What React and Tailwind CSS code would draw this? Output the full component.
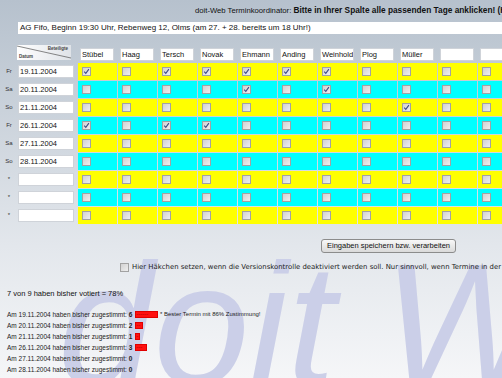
import React from 'react'

const names = ['Stübel', 'Haag', 'Tersch', 'Novak', 'Ehmann', 'Anding', 'Weinhold', 'Plog', 'Müller', '', '']

const rows = [
  { day: 'Fr', date: '19.11.2004', checks: [0, 2, 3, 4, 5, 6] },
  { day: 'Sa', date: '20.11.2004', checks: [4, 6] },
  { day: 'So', date: '21.11.2004', checks: [8] },
  { day: 'Fr', date: '26.11.2004', checks: [0, 2, 3] },
  { day: 'Sa', date: '27.11.2004', checks: [] },
  { day: 'So', date: '28.11.2004', checks: [] },
  { day: '*', date: '', checks: [] },
  { day: '*', date: '', checks: [] },
  { day: '*', date: '', checks: [] },
]

const stats = [
  { date: '19.11.2004', n: 6, note: '* Bester Termin mit 86% Zustimmung!' },
  { date: '20.11.2004', n: 2 },
  { date: '21.11.2004', n: 1 },
  { date: '26.11.2004', n: 3 },
  { date: '27.11.2004', n: 0 },
  { date: '28.11.2004', n: 0 },
]

function Box({ checked }) {
  return (
    <span className="w-[9px] h-[9px] shrink-0 border border-[#a2a2a2] bg-linear-to-br from-[#d2d2d2] to-[#eeeeee] flex items-center justify-center">
      {checked && (
        <svg width="7" height="7" viewBox="0 0 7 7">
          <path d="M1.2 3.6 L2.8 5.3 L5.9 1.2" fill="none" stroke="#3c4a86" strokeWidth="1.1" />
        </svg>
      )}
    </span>
  )
}

function DatumCell() {
  return (
    <div className="relative ml-[17px] w-[54px] h-[15px] bg-linear-to-r from-white to-[#dfe3e8]">
      <svg className="absolute inset-0" width="54" height="15" viewBox="0 0 54 15">
        <line x1="0" y1="1" x2="54" y2="13" stroke="#555" strokeWidth="0.7" />
      </svg>
      <span className="absolute right-[3px] top-[1px] text-[4.5px] leading-[5px] font-bold text-[#444]">Beteiligte</span>
      <span className="absolute left-[2px] bottom-[1px] text-[4.5px] leading-[5px] font-bold text-[#444]">Datum</span>
    </div>
  )
}

export default function App() {
  return (
    <div className="relative w-[502px] h-[378px] overflow-hidden bg-linear-to-b from-[#b6c1cd] via-[#e3e7ec] via-65% to-[#f5f6f8] text-[#111]" style={{ fontFamily: '"Liberation Sans", Arial, sans-serif' }}>
      <div className="absolute left-[58px] top-[238px] text-[172px] leading-none italic text-[#cbcfe8] whitespace-nowrap select-none">
        doit Web
      </div>

      <div className="relative">
        <div className="pl-[195px] pt-[6px] text-[7.7px] leading-[9px] whitespace-nowrap">
          doit-Web Terminkoordinator: <b className="text-[8.3px]">Bitte in Ihrer Spalte alle passenden Tage anklicken! (H</b>
        </div>

        <div className="ml-[18px] mt-[7px] w-[484px] h-[12px] bg-white text-[8px] leading-[12px] pl-[2px] whitespace-nowrap">
          AG Fifo, Beginn 19:30 Uhr, Rebenweg 12, Olms (am 27. + 28. bereits um 18 Uhr!)
        </div>

        <div className="mt-[11px] flex h-[17px] w-[600px]">
          <DatumCell />
          <div className="ml-[7px] flex">
            {names.map((n, i) => (
              <div key={i} className="w-[40px] shrink-0 pl-[2px] pt-[3px]">
                <div className="w-[34px] h-[13px] bg-white border border-[#cfd3d9] text-[7.5px] leading-[11px] pl-[1px] whitespace-nowrap overflow-hidden">
                  {n}
                </div>
              </div>
            ))}
          </div>
        </div>

        <div className="mt-[1px] flex flex-col gap-[1px] w-[600px]">
          {rows.map((r, ri) => (
            <div key={ri} className="flex items-center h-[17px]">
              <div className="w-[18px] text-center text-[6px] text-[#333]">{r.day}</div>
              <div className="w-[56px] h-[13px] bg-white border border-[#cfd3d9] text-[7.5px] leading-[11px] pl-[1px]">
                {r.date}
              </div>
              <div className="ml-[4px] flex gap-[1px]">
                {names.map((_, ci) => (
                  <div key={ci} className={`w-[39px] h-[17px] shrink-0 flex items-center pl-[4px] ${ri % 2 === 0 ? 'bg-[#ffff00]' : 'bg-[#00ffff]'}`}>
                    <Box checked={r.checks.includes(ci)} />
                  </div>
                ))}
              </div>
            </div>
          ))}
        </div>

        <div className="mt-[15px] ml-[321px] w-[135px] h-[14px] rounded-[3px] border border-[#8c8c8c] bg-linear-to-b from-[#f8f8f8] to-[#dadada] text-[7.5px] leading-[12px] text-center text-[#111]">
          Eingaben speichern bzw. verarbeiten
        </div>

        <div className="mt-[9px] pl-[120px] flex items-center h-[10px] whitespace-nowrap">
          <Box />
          <span className="ml-[3px] text-[6.9px] text-[#222]" style={{ fontFamily: '"DejaVu Sans", Verdana, sans-serif' }}>
            Hier Häkchen setzen, wenn die Versionskontrolle deaktiviert werden soll. Nur sinnvoll, wenn Termine in der
          </span>
        </div>

        <div className="mt-[17px] pl-[7px] text-[7.5px] leading-[9px]">7 von 9 haben bisher votiert = 78%</div>

        <div className="mt-[11px] pl-[7px]">
          {stats.map((s, i) => (
            <div key={i} className="h-[11px] flex items-center text-[6.5px] whitespace-nowrap text-[#222]">
              <span>Am {s.date} haben bisher zugestimmt: <b>{s.n}</b></span>
              {s.n > 0 && (
                <span className="ml-[3px] h-[7px] bg-[#ff1010] border border-[#e00000] text-[#a00000] text-[6px] leading-[5px] overflow-hidden" style={{ width: s.n * 3.6 + 1 }}>
                  {'-'.repeat(s.n)}
                </span>
              )}
              {s.note && <span className="ml-[2px] text-[6px]">{s.note}</span>}
            </div>
          ))}
        </div>
      </div>
    </div>
  )
}
